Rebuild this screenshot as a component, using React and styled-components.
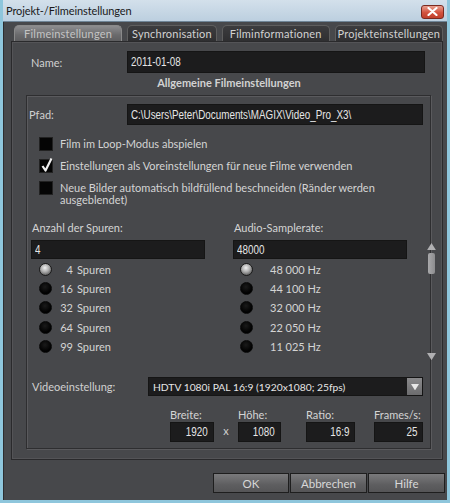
import React from "react";
import styled, { createGlobalStyle } from "styled-components";

const GlobalStyle = createGlobalStyle`
  html, body {
    margin: 0;
    padding: 0;
    background: #47484b;
  }
  * {
    box-sizing: border-box;
  }
`;

const UI_FONT = `"Lato", "Noto Sans", sans-serif`;

const Window = styled.div`
  width: 450px;
  height: 503px;
  display: flex;
  flex-direction: column;
  border: 3px solid #8ec6dc;
  border-top: none;
  background: #47484b;
  font-family: ${UI_FONT};
  font-size: 11px;
  color: #d4d4d4;
  overflow: hidden;
`;

const TitleBar = styled.div`
  height: 22px;
  margin: 0 -3px;
  padding: 0 6px 0 6px;
  display: flex;
  align-items: center;
  justify-content: space-between;
  background: linear-gradient(#d3e0eb, #bccfdf);
  border-bottom: 1px solid #6f8597;
  color: #1a1a1a;
  font-size: 11px;
  letter-spacing: -0.1px;
`;

const CloseButton = styled.div`
  width: 23px;
  height: 14px;
  margin-top: 2px;
  border: 1px solid #7a2a20;
  border-radius: 3px;
  background: linear-gradient(#e9a090, #d2523e 55%, #c0402c);
  display: flex;
  align-items: center;
  justify-content: center;
`;

const Body = styled.div`
  flex: 1;
  display: flex;
  flex-direction: column;
  padding: 3px 4px 0 7px;
  border-left: 1px solid #2c2c2e;
`;

const TabStrip = styled.div`
  display: flex;
  gap: 5px;
  padding-left: 3px;
  height: 16px;
`;

const Tab = styled.div`
  width: ${p => p.w}px;
  height: 16px;
  display: flex;
  align-items: center;
  justify-content: center;
  border: 1px solid ${p => (p.active ? "#8a8a8a" : "#5e5e5e")};
  border-bottom: none;
  border-radius: 5px 5px 0 0;
  background: ${p =>
    p.active
      ? "linear-gradient(#8d8d8f, #6a6a6c 60%, #5e5e60)"
      : "linear-gradient(#3c3c3e, #2f2f31)"};
  color: ${p => (p.active ? "#c4c4c4" : "#d2d2d2")};
  font-size: 11px;
  letter-spacing: 0.2px;
  white-space: nowrap;
`;

const Panel = styled.div`
  height: 419px;
  display: flex;
  flex-direction: column;
  border: 1px solid #2a2a2c;
  box-shadow: inset 0 0 0 1px #545457;
  padding: 9px 11px 10px 14px;
`;

const FieldRow = styled.div`
  display: flex;
  align-items: center;
  height: ${p => p.h || 21}px;
  margin-top: ${p => p.mt || 0}px;
`;

const Label = styled.div`
  width: ${p => p.w}px;
  padding-left: ${p => p.pl || 0}px;
  flex-shrink: 0;
  color: #d0d0d0;
`;

const TextBox = styled.div`
  width: ${p => p.w}px;
  height: ${p => p.h || 21}px;
  background: #1c1c1d;
  border: 1px solid #151515;
  color: #e6e6e6;
  display: flex;
  align-items: center;
  justify-content: ${p => (p.right ? "flex-end" : "flex-start")};
  padding: 0 ${p => (p.right ? 5 : 3)}px;
  white-space: nowrap;
  overflow: hidden;
`;

// Arial Narrow look: Liberation Sans squeezed to 82%
const Narrow = styled.span`
  display: inline-block;
  font-family: "Liberation Sans", Arial, sans-serif;
  font-size: 12px;
  transform: scaleX(0.82);
  transform-origin: ${p => (p.right ? "right" : "left")} center;
`;

const Heading = styled.div`
  text-align: center;
  font-weight: bold;
  color: #d2d2d2;
  height: 19px;
  line-height: 19px;
  margin: 0 0 3px 1px;
`;

const GroupBox = styled.div`
  flex: 1;
  border: 1px solid #2e2e30;
  box-shadow: 1px 1px 0 #5a5a5d, inset 1px 1px 0 #5a5a5d;
  padding: 8px 7px 0 1px;
  display: flex;
  flex-direction: column;
`;

const CheckList = styled.div`
  display: flex;
  flex-direction: column;
  gap: 9px;
  margin-top: 13px;
  padding-left: 11px;
`;

const CheckRow = styled.div`
  display: flex;
  align-items: flex-start;
  gap: 7px;
  line-height: 12px;
`;

const CheckBox = styled.div`
  position: relative;
  width: 14px;
  height: 14px;
  flex-shrink: 0;
  background: #050505;
  border: 1px solid #222;
  margin-top: -1px;
`;

const CheckMark = styled.svg`
  position: absolute;
  left: 0px;
  top: -3px;
`;

const Columns = styled.div`
  display: grid;
  grid-template-columns: 174px 174px 18px;
  column-gap: 28px;
  margin-top: 15px;
  padding-left: 3px;
`;

const Column = styled.div`
  display: flex;
  flex-direction: column;
`;

const ColumnLabel = styled.div`
  height: 14px;
  line-height: 14px;
  padding-left: 1px;
  margin-bottom: 5px;
`;

const RadioList = styled.div`
  display: flex;
  flex-direction: column;
  margin-top: 1px;
`;

const RadioRow = styled.div`
  display: flex;
  align-items: center;
  height: 19.2px;
  padding-left: ${p => p.pl}px;
`;

const Radio = styled.div`
  width: 13px;
  height: 13px;
  border-radius: 50%;
  flex-shrink: 0;
  background: ${p =>
    p.checked
      ? "radial-gradient(circle at 45% 35%, #f2f2f2, #a8a8a8 45%, #5a5a5a 80%)"
      : "radial-gradient(circle at 45% 35%, #1a1a1a, #000 70%)"};
  border: 1px solid ${p => (p.checked ? "#1a1a1a" : "#0a0a0a")};
`;

const RadioText = styled.div`
  width: ${p => p.w}px;
  margin-left: ${p => p.ml}px;
  text-align: ${p => p.align || "left"};
  white-space: nowrap;
`;

const ScrollBar = styled.div`
  display: flex;
  flex-direction: column;
  align-items: center;
  padding-top: 22px;
  margin-left: -13px;
  width: 18px;
`;

const ScrollThumb = styled.div`
  width: 7px;
  height: 21px;
  margin-top: 3px;
  border-radius: 2px;
  background: linear-gradient(90deg, #a9a9ab, #8c8c8e);
`;

const ScrollSpacer = styled.div`
  height: 79px;
`;

const Select = styled.div`
  width: 277px;
  height: 19px;
  background: #1c1c1d;
  border: 1px solid #151515;
  display: flex;
  align-items: center;
  justify-content: space-between;
  padding-left: 4px;
  color: #e6e6e6;
  font-size: 10.3px;
  white-space: nowrap;
`;

const SelectButton = styled.div`
  width: 15px;
  height: 17px;
  background: linear-gradient(#8a8a8c, #6c6c6e);
  display: flex;
  align-items: center;
  justify-content: center;
`;

const SizeGrid = styled.div`
  display: flex;
  margin-top: 11px;
  padding-left: 142px;
`;

const SizeField = styled.div`
  display: flex;
  flex-direction: column;
  margin-right: ${p => p.mr || 0}px;
`;

const SizeLabel = styled.div`
  height: 15px;
  line-height: 15px;
`;

const Times = styled.div`
  width: 25px;
  align-self: flex-end;
  height: 18px;
  text-align: center;
  color: #d0d0d0;
`;

const ButtonRow = styled.div`
  display: flex;
  justify-content: flex-end;
  margin-top: 13px;
  margin-right: -2px;
  gap: 1px;
`;

const Button = styled.div`
  width: ${p => p.w}px;
  height: 20px;
  display: flex;
  align-items: center;
  justify-content: center;
  border: 1px solid #1e1e1e;
  background: linear-gradient(#7a7a7c, #5e5e60 60%, #555557);
  color: #d8d8d8;
  font-size: 11.5px;
`;

const Triangle = ({ up, size = 9, color = "#b0b0b2" }) => (
  <svg width={size} height={size * 0.8} viewBox="0 0 10 8">
    <path d={up ? "M5 0 L10 8 L0 8 Z" : "M0 0 L10 0 L5 8 Z"} fill={color} />
  </svg>
);

const Field = ({ w, h, right, children }) => (
  <TextBox w={w} h={h} right={right}>
    <Narrow right={right}>{children}</Narrow>
  </TextBox>
);

const tracks = ["4", "16", "32", "64", "99"];
const rates = ["48 000", "44 100", "32 000", "22 050", "11 025"];

export default function App() {
  return (
    <>
      <GlobalStyle />
      <Window>
        <TitleBar>
          <span>Projekt-/Filmeinstellungen</span>
          <CloseButton>
            <svg width="11" height="9" viewBox="0 0 11 9">
              <path
                d="M1.5 1 L9.5 8 M9.5 1 L1.5 8"
                stroke="#fff"
                strokeWidth="2.2"
                strokeLinecap="round"
              />
            </svg>
          </CloseButton>
        </TitleBar>
        <Body>
          <TabStrip>
            <Tab active w={109}>Filmeinstellungen</Tab>
            <Tab w={90}>Synchronisation</Tab>
            <Tab w={109}>Filminformationen</Tab>
            <Tab w={109}>Projekteinstellungen</Tab>
          </TabStrip>
          <Panel>
            <FieldRow h={22}>
              <Label w={101} pl={5}>Name:</Label>
              <Field w={298} h={22}>2011-01-08</Field>
            </FieldRow>
            <Heading>Allgemeine Filmeinstellungen</Heading>
            <GroupBox>
              <FieldRow h={21}>
                <Label w={99} pl={1}>Pfad:</Label>
                <Field w={298}>C:\Users\Peter\Documents\MAGIX\Video_Pro_X3\</Field>
              </FieldRow>
              <CheckList>
                <CheckRow>
                  <CheckBox />
                  <span>Film im Loop-Modus abspielen</span>
                </CheckRow>
                <CheckRow>
                  <CheckBox>
                    <CheckMark width="14" height="16" viewBox="0 0 14 16">
                      <path
                        d="M2.5 9 L5.5 13.5 L11.5 1.5"
                        stroke="#f0f0f0"
                        strokeWidth="2.2"
                        fill="none"
                        strokeLinejoin="round"
                      />
                    </CheckMark>
                  </CheckBox>
                  <span>Einstellungen als Voreinstellungen für neue Filme verwenden</span>
                </CheckRow>
                <CheckRow>
                  <CheckBox />
                  <span>
                    Neue Bilder automatisch bildfüllend beschneiden (Ränder werden
                    <br />
                    ausgeblendet)
                  </span>
                </CheckRow>
              </CheckList>
              <Columns>
                <Column>
                  <ColumnLabel>Anzahl der Spuren:</ColumnLabel>
                  <Field w={174} h={19}>4</Field>
                  <RadioList>
                    {tracks.map((t, i) => (
                      <RadioRow key={t} pl={8}>
                        <Radio checked={i === 0} />
                        <RadioText w={16} ml={5} align="right">{t}</RadioText>
                        <RadioText w={60} ml={4}>Spuren</RadioText>
                      </RadioRow>
                    ))}
                  </RadioList>
                </Column>
                <Column>
                  <ColumnLabel>Audio-Samplerate:</ColumnLabel>
                  <Field w={174} h={19}>48000</Field>
                  <RadioList>
                    {rates.map((r, i) => (
                      <RadioRow key={r} pl={7}>
                        <Radio checked={i === 0} />
                        <RadioText w={100} ml={17}>{r} Hz</RadioText>
                      </RadioRow>
                    ))}
                  </RadioList>
                </Column>
                <ScrollBar>
                  <Triangle up />
                  <ScrollThumb />
                  <ScrollSpacer />
                  <Triangle />
                </ScrollBar>
              </Columns>
              <FieldRow h={19} mt={17}>
                <Label w={120} pl={4}>Videoeinstellung:</Label>
                <Select>
                  <span>HDTV 1080i PAL 16:9 (1920x1080; 25fps)</span>
                  <SelectButton>
                    <Triangle size={8} color="#e8e8e8" />
                  </SelectButton>
                </Select>
              </FieldRow>
              <SizeGrid>
                <SizeField>
                  <SizeLabel>Breite:</SizeLabel>
                  <Field w={44} h={20} right>1920</Field>
                </SizeField>
                <Times>x</Times>
                <SizeField mr={25}>
                  <SizeLabel>Höhe:</SizeLabel>
                  <Field w={43} h={20} right>1080</Field>
                </SizeField>
                <SizeField mr={19}>
                  <SizeLabel>Ratio:</SizeLabel>
                  <Field w={49} h={20} right>16:9</Field>
                </SizeField>
                <SizeField>
                  <SizeLabel>Frames/s:</SizeLabel>
                  <Field w={49} h={20} right>25</Field>
                </SizeField>
              </SizeGrid>
            </GroupBox>
          </Panel>
          <ButtonRow>
            <Button w={76}>OK</Button>
            <Button w={77}>Abbrechen</Button>
            <Button w={77}>Hilfe</Button>
          </ButtonRow>
        </Body>
      </Window>
    </>
  );
}
